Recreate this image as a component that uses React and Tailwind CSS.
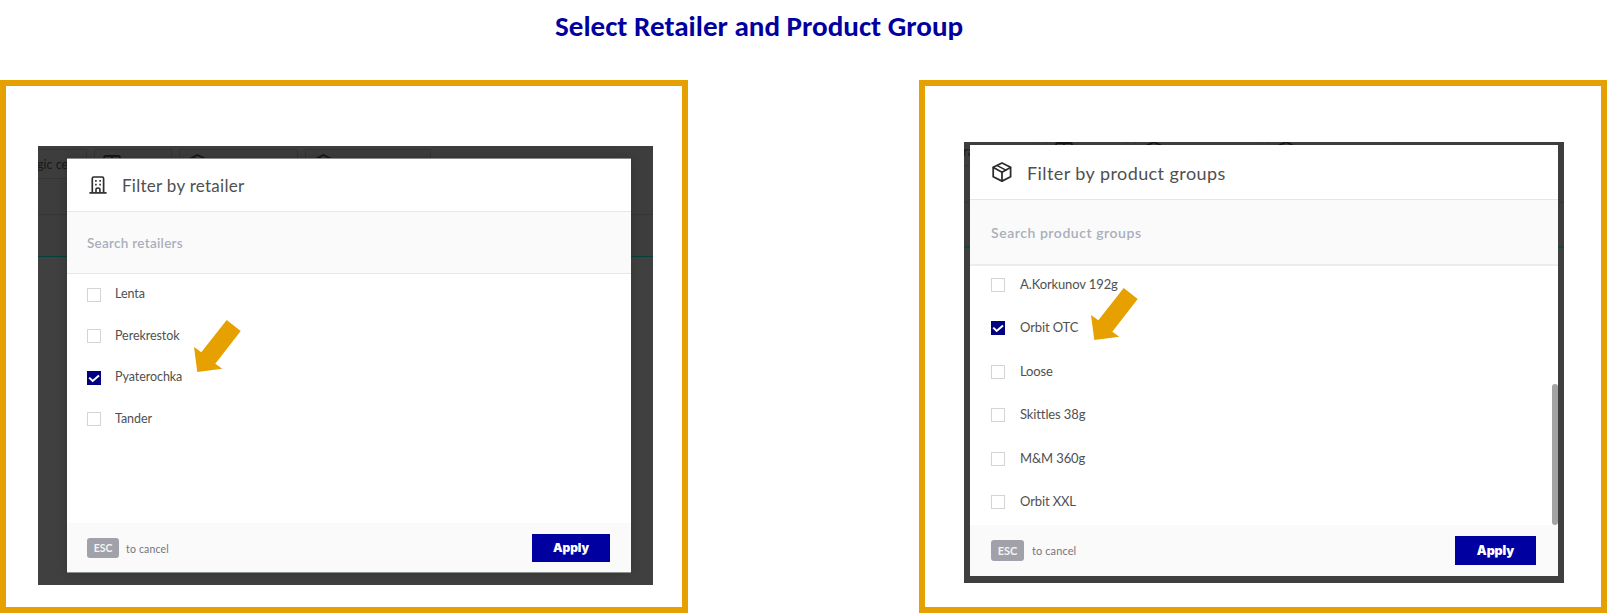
import React from 'react';

function BuildingIcon() {
  return (
    <svg className="block h-[18px] w-[18px]" viewBox="0 0 18 18" fill="none" stroke="#2e2e2e" strokeWidth="1.7">
      <path d="M3.3 16.6V2.4Q3.3 1 4.7 1H13.2Q14.6 1 14.6 2.4V16.6" />
      <path d="M0.4 16.9H17.6" />
      <path d="M7 16.6V13.6Q7 12 8.9 12Q10.9 12 10.9 13.6V16.6" strokeWidth="1.6" />
      <path d="M6.1 4.8H7.7M10.3 4.8H11.9M6.1 8.7H7.7M10.3 8.7H11.9" strokeWidth="1.7" />
    </svg>
  );
}

function BoxIcon({ className, stroke = '#2b2b2b' }) {
  return (
    <svg className={className} viewBox="0 0 20 20" fill="none" stroke={stroke} strokeWidth="1.75" strokeLinejoin="round" strokeLinecap="round">
      <path d="M10 1L18.6 5.3V14.7L10 19.1L1.2 14.7V5.3Z" />
      <path d="M1.4 5.6L10 10.2L18.4 5.6M10 10.2V19" />
      <path d="M5.3 3.6L13.8 8.1" strokeWidth="1.6" />
    </svg>
  );
}

function StoreIcon({ className }) {
  return (
    <svg className={className} viewBox="0 0 18 18" fill="none" stroke="#161616" strokeWidth="1.8">
      <path d="M3 1H15Q17 1 17 3V17H1V3Q1 1 3 1ZM9 1V7M1 5H9" />
    </svg>
  );
}

function Arrow({ className }) {
  return (
    <svg className={className} viewBox="0 0 47 52" fill="#e6a100">
      <path d="M3.3 52L0 27L7.3 32.3L32.7 0L46.7 11L21.3 43.7L28.3 48.7Z" />
    </svg>
  );
}

function Checkbox({ checked, className }) {
  return checked ? (
    <span className={`block shrink-0 bg-[#000080] ${className}`}>
      <svg className="block h-full w-full" viewBox="0 0 14 14" fill="none" stroke="#fff" strokeWidth="2">
        <path d="M2.2 6.6L5.7 10L12 4.4" />
      </svg>
    </span>
  ) : (
    <span className={`block shrink-0 border border-[#d3d3d8] bg-white ${className}`} />
  );
}

const retailers = [['Lenta'], ['Perekrestok'], ['Pyaterochka', true], ['Tander']];
const groups = [['A.Korkunov 192g'], ['Orbit OTC', true], ['Loose'], ['Skittles 38g'], ['M&M 360g'], ['Orbit XXL']];

function RetailerPanel() {
  return (
    <section className="h-[533px] w-[688px] border-[6px] border-[#e6a100] pt-[60px] pl-8">
      <div className="relative h-[439px] w-[615px] overflow-hidden bg-[#404040] pt-3 pl-[29px]">
        <div className="absolute inset-x-0 top-0 h-[111px] border-b border-[#06403a] bg-[#3d3d3d]">
          <div className="flex h-[69px] gap-[7px] border-b border-[#363636] pt-[3px]">
            <div className="h-[30px] w-[49px] border border-l-0 border-[#343434] pt-[6px] text-[12.5px] leading-[18px] text-[#191919]">
              <span className="-ml-px whitespace-nowrap">gic ce</span>
            </div>
            <div className="h-[30px] w-[78px] border border-[#343434] pt-[5px] pl-2"><StoreIcon className="h-[18px] w-[18px]" /></div>
            <div className="h-[30px] w-[119px] border border-[#343434] pt-[4px] pl-2"><BoxIcon className="h-[19px] w-[19px]" stroke="#161616" /></div>
            <div className="h-[30px] w-[126px] border border-[#343434] pt-[4px] pl-2"><BoxIcon className="h-[19px] w-[19px]" stroke="#161616" /></div>
          </div>
        </div>
        <div className="relative flex h-[415px] w-[564px] flex-col border-t border-b border-t-[#8b8b8b] border-b-[#8a918f] bg-white shadow-[0_0_10px_rgba(0,0,0,0.18)]">
          <header className="flex h-[53px] shrink-0 items-center gap-[15px] border-b border-[#e7e7e7] pl-[22px]">
            <BuildingIcon />
            <h2 className="pt-[2px] text-[17px] leading-6 tracking-[0.28px] text-[#505050]">Filter by retailer</h2>
          </header>
          <div className="flex h-[62px] shrink-0 items-center border-b border-[#e7e7e7] bg-[#fafafa] pt-px pl-5 text-[13.5px] font-semibold tracking-[0.27px] text-[#a9aebb]">
            Search retailers
          </div>
          <ul className="flex min-h-0 flex-1 flex-col pt-[13.6px] pl-5">
            {retailers.map(([name, checked]) => (
              <li key={name} className="flex h-[41.6px] shrink-0 items-start gap-[14px]">
                <Checkbox checked={checked} className="h-[14px] w-[14px]" />
                <span className="-mt-[1.6px] text-[12.5px] leading-4 tracking-[-0.06px] text-[#505050]">{name}</span>
              </li>
            ))}
          </ul>
          <footer className="flex h-[49px] shrink-0 items-center bg-[#fafafa] pl-5">
            <kbd className="flex h-5 w-8 items-center justify-center rounded-[3px] bg-[#a1a1aa] pt-[2px] font-[Lato] text-[10.5px] font-bold text-[#f4f4f5]">ESC</kbd>
            <span className="ml-[7px] flex-1 pt-[4px] text-[10.5px] tracking-[0.17px] text-[#75757c]">to cancel</span>
            <button className="mr-[21px] h-7 w-[78px] bg-[#0000a0] pt-px font-[Inter] text-[12px] font-black tracking-[-0.1px] text-white">Apply</button>
          </footer>
        </div>
        <Arrow className="absolute top-[174px] left-[156px] h-[52px] w-[47px]" />
      </div>
    </section>
  );
}

function ProductGroupPanel() {
  return (
    <section className="h-[533px] w-[688px] border-[6px] border-[#e6a100] pt-[56px] pl-[39px]">
      <div className="relative h-[441px] w-[600px] overflow-hidden bg-[#3f3f3f] pt-[3px] pl-[6px]">
        <div className="absolute inset-x-0 top-0 h-[106px] border-b-2 border-[#17443f] bg-[#3d3d3d]">
          <div className="flex h-[61px] gap-2 border-b border-[#363636]">
            <div className="h-[24px] w-[74px] border-r border-b border-[#363636] text-[13px] leading-[18px] text-[#191919]">
              <span className="-ml-px whitespace-nowrap">ra</span>
            </div>
            <div className="h-[24px] w-[81px] border-x border-[#363636] pl-2"><StoreIcon className="h-[18px] w-[18px]" /></div>
            <div className="h-[24px] w-[124px] border-x border-[#363636] pl-2"><BoxIcon className="-mt-px h-5 w-5" stroke="#161616" /></div>
            <div className="h-[24px] w-[131px] border-x border-[#363636] pl-2"><BoxIcon className="-mt-px h-5 w-5" stroke="#161616" /></div>
          </div>
        </div>
        <div className="relative flex h-[431px] w-[588px] flex-col bg-white">
          <header className="flex h-[55px] shrink-0 items-center gap-[15px] border-b border-[#e5e5e5] pl-[22px]">
            <BoxIcon className="block h-5 w-5" />
            <h2 className="pt-px text-[18px] leading-6 tracking-[0.42px] text-[#505050]">Filter by product groups</h2>
          </header>
          <div className="flex h-[66px] shrink-0 items-center border-b-2 border-[#ececec] bg-[#fafafa] pl-[21px] text-[14px] font-semibold tracking-[0.55px] text-[#a9aebb]">
            Search product groups
          </div>
          <ul className="flex min-h-0 flex-1 flex-col overflow-hidden pt-[12px] pl-[21px]">
            {groups.map(([name, checked]) => (
              <li key={name} className="flex h-[43.4px] shrink-0 items-start gap-[15px]">
                <Checkbox checked={checked} className="h-[14px] w-[14px]" />
                <span className="-mt-[2px] text-[13px] leading-4 tracking-[-0.12px] text-[#505050]">{name}</span>
              </li>
            ))}
          </ul>
          <div className="absolute top-[239px] right-0 h-[141px] w-[6px] rounded-full bg-[#a3a3a3]" />
          <footer className="flex h-[51px] shrink-0 items-center bg-[#fafafa] pl-[21px]">
            <kbd className="flex h-[21px] w-[33px] items-center justify-center rounded-[3px] bg-[#a1a1aa] pt-px font-[Lato] text-[11px] font-bold text-[#f4f4f5]">ESC</kbd>
            <span className="ml-2 flex-1 pt-[2px] text-[11px] tracking-[0.1px] text-[#75757c]">to cancel</span>
            <button className="mr-[22px] h-[29px] w-[81px] bg-[#0000a0] pt-px font-[Inter] text-[12.5px] font-black tracking-[-0.1px] text-white">Apply</button>
          </footer>
        </div>
        <Arrow className="absolute top-[146px] left-[127px] h-[52px] w-[47px]" />
      </div>
    </section>
  );
}

export default function App() {
  return (
    <main className="flex h-[613px] w-[1607px] flex-col overflow-hidden bg-white font-[Lato,sans-serif]">
      <h1 className="h-20 pt-[8px] pl-[555px] font-[Carlito,sans-serif] text-[29.1px] leading-9 font-bold text-[#0000a0]">
        Select Retailer and Product Group
      </h1>
      <div className="flex justify-between">
        <RetailerPanel />
        <ProductGroupPanel />
      </div>
    </main>
  );
}
